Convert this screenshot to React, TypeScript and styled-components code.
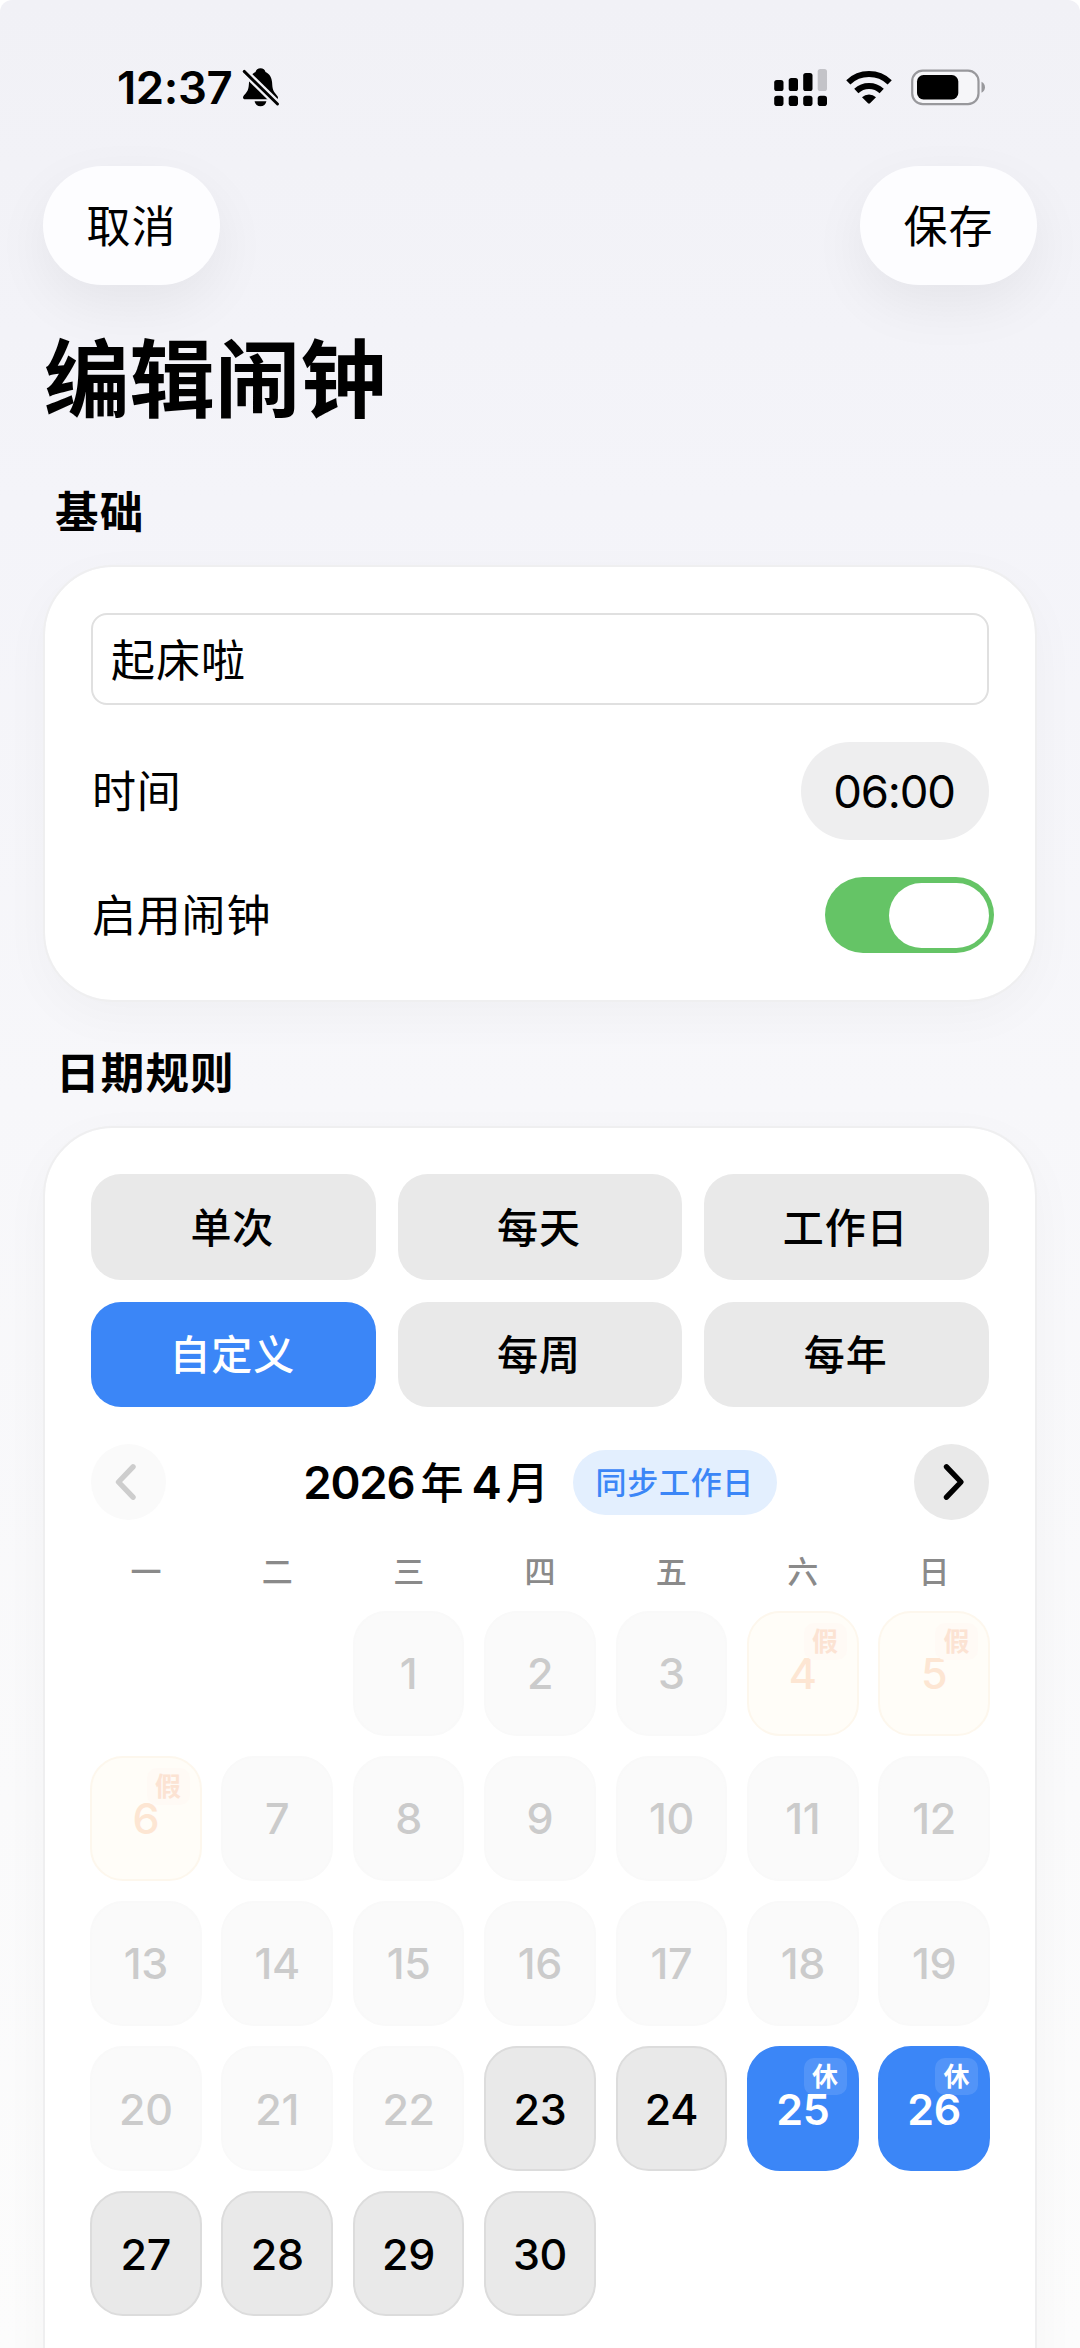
import React, { useState } from "react";
import styled, { createGlobalStyle, css } from "styled-components";

const GlobalStyle = createGlobalStyle`
  * { box-sizing: border-box; }
  html, body { margin: 0; padding: 0; background: #fff; }
  body {
    font-family: Inter, "Noto Sans CJK SC", sans-serif;
    color: #000;
    overflow: hidden;
  }
  button { font-family: inherit; color: inherit; border: 0; padding: 0; margin: 0; }
`;

const Screen = styled.main`
  width: 1080px;
  height: 2348px;
  overflow: hidden;
  border-radius: 12px 12px 0 0;
  background: linear-gradient(180deg, #f1f1f6 0, #f4f4f9 500px, #f7f7fa 1100px, #fafafb 1800px, #fcfcfc 2348px);
  display: flex;
  flex-direction: column;
`;

const StatusBar = styled.header`
  flex: none;
  height: 166px;
  padding: 61px 94px 0 117px;
  display: flex;
  justify-content: space-between;
  align-items: flex-start;
`;

const StatusGroup = styled.div`
  display: flex;
  align-items: center;
  height: 53px;
`;

const Clock = styled.span`
  font-size: 45.5px;
  line-height: 53px;
  font-weight: 600;
  width: 125px;
  white-space: nowrap;
  letter-spacing: -0.4px;
`;

const TopBar = styled.nav`
  flex: none;
  display: flex;
  justify-content: space-between;
  padding: 0 43px;
`;

const PillButton = styled.button`
  width: 177px;
  height: 119px;
  padding-top: 3px;
  border-radius: 60px;
  background: #fdfdff;
  box-shadow: 0 20px 56px rgba(0, 0, 0, 0.06);
  font-size: 44px;
  line-height: 60px;
  letter-spacing: 0.9px;
`;

const PageTitle = styled.h1`
  flex: none;
  margin: 35px 0 0 44px;
  font-size: 85.5px;
  line-height: 120px;
  font-weight: 700;
`;

const SectionTitle = styled.h2<{ $top: number; $left: number; $bottom: number }>`
  flex: none;
  margin: ${(p) => p.$top}px 0 ${(p) => p.$bottom}px ${(p) => p.$left}px;
  font-size: 43.5px;
  line-height: 60px;
  font-weight: 600;
  letter-spacing: 1.2px;
`;

const Card = styled.section<{ $height: number }>`
  flex: none;
  margin: 0 43px;
  height: ${(p) => p.$height}px;
  padding: 46px;
  border: 2px solid #efeff0;
  border-radius: 70px;
  background: #fff;
  background-clip: padding-box;
  box-shadow: 0 14px 50px rgba(0, 0, 0, 0.03);
`;

const NameField = styled.input`
  display: block;
  width: 100%;
  height: 92px;
  border: 2px solid #e0e0e0;
  border-radius: 16px;
  background: #fff;
  padding: 0 18px 2px;
  font-family: inherit;
  font-size: 44px;
  letter-spacing: 1px;
  color: #000;
  outline: none;
`;

const SettingRow = styled.div<{ $top: number; $height: number }>`
  display: flex;
  align-items: center;
  justify-content: space-between;
  margin-top: ${(p) => p.$top}px;
  height: ${(p) => p.$height}px;
`;

const RowLabel = styled.span`
  padding: 2px 0 0 1px;
  font-size: 44px;
  line-height: 60px;
  letter-spacing: 0.8px;
`;

const TimePill = styled.button`
  width: 188px;
  height: 98px;
  padding: 2px 2px 0 0;
  border-radius: 49px;
  background: #eeeeef;
  font-size: 45.5px;
  line-height: 54px;
  letter-spacing: -1.2px;
`;

const Toggle = styled.button<{ $on: boolean }>`
  width: 169px;
  height: 76px;
  margin-right: -5px;
  padding: 5.5px 5px;
  border-radius: 38px;
  background: ${(p) => (p.$on ? "#65c466" : "#e4e4e6")};
  display: flex;
  justify-content: ${(p) => (p.$on ? "flex-end" : "flex-start")};
`;

const Knob = styled.span`
  width: 100px;
  height: 65px;
  border-radius: 33px;
  background: #fff;
`;

const OptionGrid = styled.div`
  display: grid;
  grid-template-columns: repeat(3, 1fr);
  gap: 22px;
`;

const Option = styled.button<{ $active: boolean }>`
  height: 105.5px;
  padding: 2px 2px 0 0;
  border-radius: 30px;
  background: ${(p) => (p.$active ? "#3b86f7" : "#e9e9e9")};
  color: ${(p) => (p.$active ? "#fff" : "#000")};
  font-size: 41px;
  line-height: 56px;
  font-weight: 500;
  letter-spacing: 0.9px;
`;

const MonthBar = styled.div`
  display: flex;
  align-items: center;
  justify-content: space-between;
  height: 76px;
  margin-top: 37px;
`;

const RoundButton = styled.button`
  width: 75px;
  height: 76px;
  border-radius: 50%;
  background: #e9e9e9;
  display: flex;
  align-items: center;
  justify-content: center;
  &:disabled { background: #fafafa; color: #cdcdcd; }
`;

const MonthLabel = styled.div`
  display: flex;
  align-items: center;
  gap: 24px;
`;

const MonthText = styled.span`
  padding-top: 2px;
  font-size: 45.5px;
  line-height: 60px;
  font-weight: 600;
  letter-spacing: -1.1px;
  display: flex;
  white-space: nowrap;
`;

const MonthUnit = styled.span<{ $before: number; $after: number }>`
  font-size: 43px;
  font-weight: 500;
  letter-spacing: 0;
  margin: 0 ${(p) => p.$after}px 0 ${(p) => p.$before}px;
`;

const SyncBadge = styled.button`
  width: 204px;
  height: 65px;
  padding-top: 1px;
  border-radius: 33px;
  background: #e3effe;
  color: #3b86f7;
  font-size: 31px;
  line-height: 42px;
  font-weight: 500;
  letter-spacing: 0.7px;
`;

const Weekdays = styled.div`
  display: grid;
  grid-template-columns: repeat(7, 1fr);
  column-gap: 21.5px;
  margin-top: 30px;
  height: 44px;
  text-align: center;
  font-size: 31px;
  line-height: 44px;
  font-weight: 500;
  color: #8a8a8a;
`;

const Days = styled.div`
  display: grid;
  grid-template-columns: repeat(7, 1fr);
  gap: 19.6px 19.8px;
  margin: 16.5px -1px 0;
`;

type DayKind = "blank" | "past" | "holiday" | "open" | "picked";

const kinds = {
  blank: css`visibility: hidden;`,
  past: css`background: #fafafa; border-color: #f9f9f9; color: #cbcbcb;`,
  holiday: css`background: #fffdf8; border-color: #fdf7ed; color: #fde6d3;`,
  open: css`background: #e9e9e9; border-color: #dcdcdc;`,
  picked: css`background: #3b86f7; border-color: #3b86f7; color: #fff; font-weight: 600;`,
};

const Day = styled.div<{ $kind: DayKind }>`
  position: relative;
  height: 125.5px;
  border: 2.5px solid transparent;
  border-radius: 33px;
  display: flex;
  align-items: center;
  justify-content: center;
  font-size: 43px;
  line-height: 52px;
  font-weight: 500;
  letter-spacing: -0.3px;
  ${(p) => kinds[p.$kind]}
`;

const DayTag = styled.span<{ $picked: boolean }>`
  position: absolute;
  top: 10px;
  right: 10px;
  width: 43px;
  height: 37px;
  border-radius: 10px;
  text-align: center;
  font-size: 26px;
  line-height: 38px;
  font-weight: 600;
  letter-spacing: 0;
  background: ${(p) => (p.$picked ? "rgba(255,255,255,0.12)" : "#fffaf5")};
  color: ${(p) => (p.$picked ? "#fff" : "#fce3d3")};
`;

const BellSlash = () => (
  <svg width="37" height="39" viewBox="0 0 37 39">
    <path d="M18.5 0.3c2.6 0 4.6 1.6 5 3.8 4 1.7 6.300 5.500 6.600 10.500 0.300 6 0.900 8.600 4 11.800 1.200 1.200 1.900 2.300 1.900 3.300 0 1.100-0.800 1.600-2.300 1.600H3.300C1.800 31.300 1 30.700 1 29.500c0-1.200 0.800-2.100 2-3.300 3-3 3.700-5.700 4-11.600 0.300-5 2.600-8.800 6.500-10.500 0.500-2.200 2.400-3.800 5-3.800z" fill="#000" />
    <path d="M12.600 33.300h11.800c-0.500 3-2.900 5-5.900 5s-5.400-2-5.900-5z" fill="#000" />
    <path d="M2.200 3.400L35.500 36" stroke="#f1f1f6" strokeWidth="7.400" />
    <path d="M2.200 3.400L35.500 36" stroke="#000" strokeWidth="2.900" strokeLinecap="round" />
  </svg>
);

const StatusIcons = () => (
  <svg width="212" height="38" viewBox="774 69 212 38">
    {[80, 78, 73].map((y, i) => (
      <rect key={y} x={774.2 + i * 14.5} y={y} width="9.3" height={91 - y} rx="2.600" />
    ))}
    <rect x="817.700" y="69" width="9.300" height="22" rx="2.600" fill="#c3c3c8" />
    {[0, 1, 2, 3].map((i) => (
      <rect key={i} x={774.2 + i * 14.5} y="95.700" width="9.300" height="10.300" rx="2.800" />
    ))}
    <g fill="none" stroke="#000" strokeWidth="6">
      <path d="M848.300 82.300a30 30 0 0 1 41.400 0" />
      <path d="M856.300 91a18.300 18.300 0 0 1 25.400 0" />
    </g>
    <path d="M862 97.200a10.300 10.300 0 0 1 14 0l-6 6a1.500 1.500 0 0 1-2 0z" />
    <rect x="912.200" y="70.700" width="66.300" height="33.400" rx="10.500" fill="#f6f6f9" stroke="#98989c" strokeWidth="2.200" />
    <rect x="917" y="75" width="41.300" height="24.500" rx="6.500" />
    <path d="M981.500 81.800c4.600 1.800 4.600 9.200 0 11z" fill="#98989c" />
  </svg>
);

const Chevron = ({ flip = false }: { flip?: boolean }) => (
  <svg width="28" height="42" viewBox="0 0 28 42">
    <path
      d={flip ? "M18 5.800L3.500 21L18 36.200" : "M9.500 5.800L24 21L9.500 36.200"}
      fill="none"
      stroke="currentColor"
      strokeWidth="5.400"
      strokeLinecap="round"
      strokeLinejoin="round"
    />
  </svg>
);

const options = ["单次", "每天", "工作日", "自定义", "每周", "每年"];
const weekdays = ["一", "二", "三", "四", "五", "六", "日"];
const holidays = [4, 5, 6];
const picked = [25, 26];

const kindOf = (day: number): DayKind => {
  if (picked.includes(day)) return "picked";
  if (holidays.includes(day)) return "holiday";
  return day < 23 ? "past" : "open";
};

export default function App() {
  const [rule, setRule] = useState("自定义");
  const [enabled, setEnabled] = useState(true);
  const [name, setName] = useState("起床啦");

  return (
    <>
      <GlobalStyle />
      <Screen>
        <StatusBar>
          <StatusGroup>
            <Clock>12:37</Clock>
            <BellSlash />
          </StatusGroup>
          <StatusGroup>
            <StatusIcons />
          </StatusGroup>
        </StatusBar>

        <TopBar>
          <PillButton>取消</PillButton>
          <PillButton>保存</PillButton>
        </TopBar>

        <PageTitle>编辑闹钟</PageTitle>

        <SectionTitle $top={42} $left={55} $bottom={23}>基础</SectionTitle>
        <Card $height={437}>
          <NameField value={name} onChange={(e) => setName(e.target.value)} />
          <SettingRow $top={37} $height={98}>
            <RowLabel>时间</RowLabel>
            <TimePill>06:00</TimePill>
          </SettingRow>
          <SettingRow $top={37} $height={76}>
            <RowLabel>启用闹钟</RowLabel>
            <Toggle $on={enabled} onClick={() => setEnabled(!enabled)}>
              <Knob />
            </Toggle>
          </SettingRow>
        </Card>

        <SectionTitle $top={41} $left={56} $bottom={23}>日期规则</SectionTitle>
        <Card $height={1400}>
          <OptionGrid>
            {options.map((o) => (
              <Option key={o} $active={o === rule} onClick={() => setRule(o)}>
                {o}
              </Option>
            ))}
          </OptionGrid>

          <MonthBar>
            <RoundButton disabled>
              <Chevron flip />
            </RoundButton>
            <MonthLabel>
              <MonthText>
                2026
                <MonthUnit $before={6} $after={8}>年</MonthUnit>
                4
                <MonthUnit $before={5} $after={0}>月</MonthUnit>
              </MonthText>
              <SyncBadge>同步工作日</SyncBadge>
            </MonthLabel>
            <RoundButton>
              <Chevron />
            </RoundButton>
          </MonthBar>

          <Weekdays>
            {weekdays.map((w) => (
              <span key={w}>{w}</span>
            ))}
          </Weekdays>

          <Days>
            <Day $kind="blank" />
            <Day $kind="blank" />
            {Array.from({ length: 30 }, (_, i) => i + 1).map((day) => {
              const kind = kindOf(day);
              return (
                <Day key={day} $kind={kind}>
                  {day}
                  {kind === "holiday" && <DayTag $picked={false}>假</DayTag>}
                  {kind === "picked" && <DayTag $picked>休</DayTag>}
                </Day>
              );
            })}
          </Days>
        </Card>
      </Screen>
    </>
  );
}
